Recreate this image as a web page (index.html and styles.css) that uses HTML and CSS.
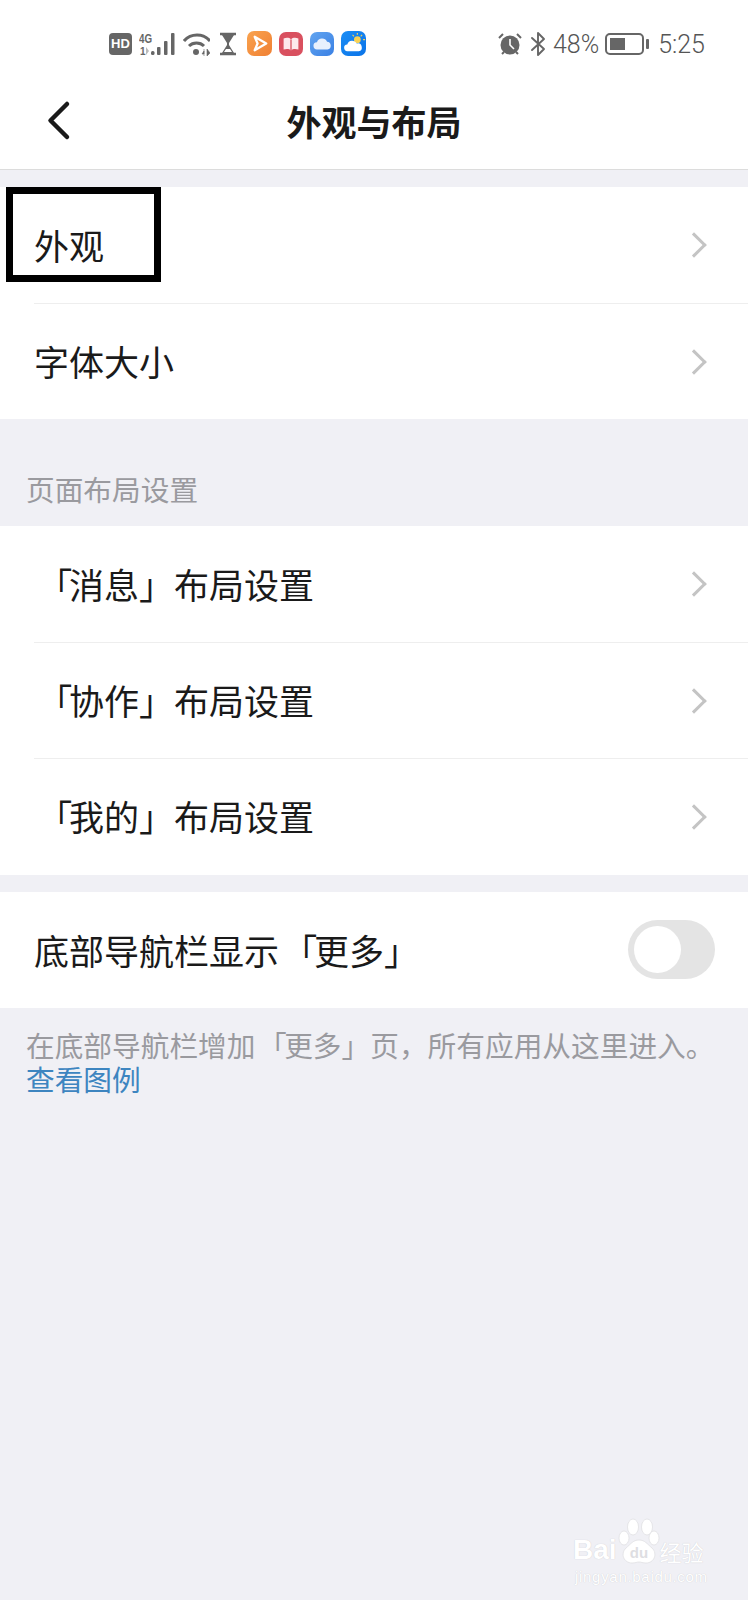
FILE: index.html
```html
<!DOCTYPE html>
<html lang="zh-CN">
<head>
  <meta charset="UTF-8" />
  <title>外观与布局</title>
  <link rel="stylesheet" href="styles.css">
</head>
<body>
  <div id="statusbar">
    <div class="status-left">
      <span class="hd-badge">HD</span>
      <svg class="st-icon" width="37" height="24" viewBox="0 0 37 24">
        <text x="0" y="11" class="tiny" textLength="13" lengthAdjust="spacingAndGlyphs">4G</text>
        <text x="1" y="23" class="tiny-small">1</text>
        <path d="M7 15l3 4-3 4z" fill="#bbb"/>
        <rect x="12" y="19" width="3.500" height="4" rx="1.500" fill="#666"/>
        <rect x="18" y="15" width="3.500" height="8" rx="1" fill="#666"/>
        <rect x="25" y="9" width="3.500" height="14" rx="1" fill="#666"/>
        <rect x="32" y="1" width="3.500" height="22" rx="1" fill="#666"/>
      </svg>
      <svg class="st-icon" width="27" height="24" viewBox="0 0 27 24">
        <path d="M1 9c7-8 19-8 26 0" fill="none" stroke="#666" stroke-width="3"/>
        <path d="M6 14c4-4 11-4 15 0" fill="none" stroke="#666" stroke-width="3"/>
        <circle cx="13" cy="20" r="3" fill="#666"/>
        <path d="M21 19l-2 3h2zM21 17v7M24 17v7l3-3z" fill="#666" stroke="#666" stroke-width=".6"/>
      </svg>
      <svg class="st-icon hourglass" width="18" height="24" viewBox="0 0 18 24">
        <path d="M1 2h16M1 22h16" stroke="#666" stroke-width="2.400"/>
        <path d="M3 3h12l-5 8v2l5 8H3l5-8v-2z" fill="#666"/>
        <path d="M7 17h4l2 3H5z" fill="#fff"/>
      </svg>
      <span class="app-icon app-orange">
        <svg viewBox="0 0 26 26"><path d="M8 6l12 7-12 7 3-7z" fill="none" stroke="#fff" stroke-width="2.400" stroke-linejoin="round"/></svg>
      </span>
      <span class="app-icon app-red">
        <svg viewBox="0 0 26 26"><path d="M5 7c3-1 6-1 8 1 2-2 5-2 8-1v12c-3-1-6-1-8 1-2-2-5-2-8-1z" fill="#fde9ec"/><path d="M13 8v12" stroke="#d9505f" stroke-width="1.400"/></svg>
      </span>
      <span class="app-icon app-blue">
        <svg viewBox="0 0 26 26"><path d="M8 19a4 4 0 0 1-.5-8 6 6 0 0 1 11-.5 4.300 4.300 0 0 1 .5 8.500z" fill="#e8f1fd"/></svg>
      </span>
      <span class="app-icon app-weather">
        <svg viewBox="0 0 26 26"><circle cx="17" cy="9" r="3.500" fill="#f7d154"/><path d="M17 2v2M23 9h2M22 4l-1.500 1.500M12 4l1.500 1.500" stroke="#f7d154" stroke-width="1.200"/><path d="M7 21a3.500 3.500 0 0 1-.5-7 5.500 5.500 0 0 1 10-1 4 4 0 0 1 2 8z" fill="#fff"/></svg>
      </span>
    </div>
    <div class="status-right">
      <svg class="st-icon" width="24" height="24" viewBox="1 0 24 24">
        <circle cx="13" cy="13" r="9.500" fill="#666"/>
        <path d="M13 7v6l4 4" fill="none" stroke="#fff" stroke-width="1.600"/>
        <path d="M2 6l4-4M24 6l-4-4M5 22l2-2M21 22l-2-2" stroke="#666" stroke-width="2"/>
      </svg>
      <svg class="st-icon st-bt" width="16" height="26" viewBox="0 0 16 26">
        <path d="M2 7l12 11-6 6V2l6 6L2 19" fill="none" stroke="#666" stroke-width="1.900" stroke-linejoin="round" stroke-linecap="round"/>
      </svg>
      <span class="st-text st-pct">48%</span>
      <span class="battery"><span class="battery-level"></span></span>
      <span class="battery-tip"></span>
      <span class="st-text st-time">5:25</span>
    </div>
  </div>

  <div id="navbar">
    <svg class="back-icon" width="26" height="42" viewBox="0 0 26 42">
      <path d="M21 4L4.500 20.500 21 37" fill="none" stroke="#1a1a1a" stroke-width="4.500" stroke-linecap="round" stroke-linejoin="round"/>
    </svg>
    <h1>外观与布局</h1>
  </div>

  <div class="group first-group">
    <div class="row">
      <span class="row-label">外观</span>
      <span class="chevron"></span>
    </div>
    <div class="row">
      <span class="row-label">字体大小</span>
      <span class="chevron"></span>
    </div>
    <div class="highlight-box"></div>
  </div>

  <div class="section-title">页面布局设置</div>

  <div class="group second-group">
    <div class="row">
      <span class="row-label"><span class="qm-open">「</span>消息」布局设置</span>
      <span class="chevron"></span>
    </div>
    <div class="row">
      <span class="row-label"><span class="qm-open">「</span>协作」布局设置</span>
      <span class="chevron"></span>
    </div>
    <div class="row">
      <span class="row-label"><span class="qm-open">「</span>我的」布局设置</span>
      <span class="chevron"></span>
    </div>
  </div>

  <div class="group third-group">
    <div class="row">
      <span class="row-label">底部导航栏显示<span class="qm-open">「</span>更多」</span>
      <span class="toggle"><span class="toggle-knob"></span></span>
    </div>
  </div>

  <p class="footnote">在底部导航栏增加<span class="qm-open">「</span>更多」页，所有应用从这里进入。<br><a href="#">查看图例</a></p>

  <div class="watermark">
    <div class="wm-top">
      <span class="wm-bai">Bai</span>
      <svg class="wm-paw" width="42" height="47" viewBox="0 0 42 47">
        <ellipse cx="15" cy="9" rx="5.500" ry="8" class="paw-part"/>
        <ellipse cx="29" cy="9" rx="5.500" ry="8" class="paw-part"/>
        <ellipse cx="6" cy="20" rx="5" ry="7" class="paw-part"/>
        <ellipse cx="36" cy="20" rx="5" ry="7" class="paw-part"/>
        <path d="M21 22c6 0 8 4 13 8 6 6 2 15-6 15-3 0-5-1-7-1s-4 1-7 1c-8 0-12-9-6-15 5-4 7-8 13-8z" class="paw-part"/>
        <text x="21" y="40" text-anchor="middle" class="paw-du">du</text>
      </svg>
      <span class="wm-cn">经验</span>
    </div>
    <div class="wm-url">jingyan.baidu.com</div>
  </div>
</body>
</html>
```

FILE: styles.css
```css
* {
  box-sizing: border-box;
}

body {
  margin: 0;
  width: 748px;
  height: 1600px;
  overflow: hidden;
  position: relative;
  background: #f0f0f5;
  color: #1a1a1a;
  font-family: "Noto Sans CJK SC", "Liberation Sans", sans-serif;
}

/* status bar */
#statusbar {
  height: 80px;
  background: #fff;
  display: flex;
  justify-content: space-between;
  align-items: center;
  padding: 7px 43px 0 109px;
}

.status-left,
.status-right {
  display: flex;
  align-items: center;
}

.status-left {
  gap: 7px;
}

.st-icon {
  display: block;
}

.tiny {
  font-family: "Liberation Sans", sans-serif;
  font-size: 13px;
  font-weight: bold;
  fill: #666;
}

.tiny-small {
  font-family: "Liberation Sans", sans-serif;
  font-size: 10px;
  font-weight: bold;
  fill: #666;
}

.hd-badge {
  width: 23px;
  height: 22px;
  border-radius: 4px;
  background: #666;
  color: #fff;
  font-family: "Liberation Sans", sans-serif;
  font-size: 13px;
  font-weight: bold;
  text-align: center;
  line-height: 22px;
}

.hourglass {
  margin-left: 2px;
  margin-right: 3px;
}

.app-icon {
  width: 25px;
  height: 25px;
  border-radius: 7px;
  display: block;
}

.app-icon svg {
  display: block;
  width: 100%;
  height: 100%;
}

.app-orange {
  background: linear-gradient(135deg, #f9a34f, #f08033);
}

.app-red {
  width: 24px;
  height: 24px;
  background: #d9505f;
}

.app-blue {
  width: 24px;
  height: 24px;
  background: linear-gradient(135deg, #62a5f0, #3a80e4);
}

.app-weather {
  background: linear-gradient(135deg, #1a8df5, #0b74e8);
}

.status-right {
  color: #666;
}

.st-bt {
  margin-left: 8px;
}

.st-text {
  margin-top: 2px;
  font-family: "Roboto", sans-serif;
  font-weight: 300;
  font-size: 25px;
  color: #555;
}

.st-pct {
  margin-left: 7px;
}

.battery {
  width: 39px;
  height: 22px;
  margin-left: 6px;
  border: 2px solid #666;
  border-radius: 5px;
  padding: 3px;
  display: block;
}

.battery-level {
  display: block;
  width: 15px;
  height: 12px;
  background: #666;
}

.battery-tip {
  width: 3px;
  height: 10px;
  margin-left: 2px;
  background: #666;
  border-radius: 1px;
}

.st-time {
  margin-left: 9px;
}

/* nav */
#navbar {
  height: 90px;
  background: #fff;
  border-bottom: 1px solid #dcdcdc;
  display: flex;
  align-items: center;
  justify-content: center;
  position: relative;
  padding-bottom: 8px;
}

.back-icon {
  position: absolute;
  left: 46px;
  top: 20px;
}

#navbar h1 {
  margin: 0;
  font-size: 35px;
  font-weight: 700;
  line-height: 1;
}

/* list */
.group {
  background: #fff;
  position: relative;
}

.first-group {
  margin-top: 17px;
}

.second-group {
  padding-bottom: 1px;
}

.third-group {
  margin-top: 17px;
}

.row {
  height: 116px;
  margin-left: 34px;
  padding-right: 40px;
  display: flex;
  align-items: center;
  justify-content: space-between;
  border-top: 1px solid #eeeeee;
}

.row:first-child {
  border-top: none;
}

.row-label {
  font-size: 35px;
  line-height: 1;
  padding-bottom: 2px;
}

/* opening bracket hugs the text that follows it */
.qm-open {
  margin-left: .09em;
  margin-right: -.09em;
}

.chevron {
  width: 18px;
  height: 18px;
  margin-right: 5px;
  border-top: 3px solid #c4c4c4;
  border-right: 3px solid #c4c4c4;
  transform: rotate(45deg);
}

.highlight-box {
  position: absolute;
  left: 6px;
  top: 0;
  width: 155px;
  height: 95px;
  border: 7px solid #000;
}

.section-title {
  height: 107px;
  padding: 52px 0 0 26px;
  font-size: 28.7px;
  line-height: 36px;
  color: #9a9a9f;
}

.toggle {
  width: 87px;
  height: 59px;
  margin-right: -7px;
  margin-bottom: 2px;
  border-radius: 30px;
  background: #e4e4e4;
  padding: 6px;
  display: block;
}

.toggle-knob {
  display: block;
  width: 47px;
  height: 47px;
  border-radius: 50%;
  background: #fff;
}

.footnote {
  margin: 0;
  padding: 20px 20px 0 26px;
  font-size: 28.7px;
  line-height: 34px;
  color: #9a9a9f;
  white-space: nowrap;
}

.footnote a {
  color: #3d85c0;
  text-decoration: none;
}

/* baidu mark */
.watermark {
  position: absolute;
  left: 573px;
  top: 1518px;
  width: 150px;
  color: #fff;
  font-family: "Liberation Sans", sans-serif;
}

.wm-top {
  display: flex;
  align-items: flex-start;
  height: 47px;
}

.wm-bai {
  margin-top: 18px;
  font-size: 28px;
  font-weight: bold;
  line-height: 28px;
  text-shadow: 0 0 1px #c4c4c8;
}

.wm-paw {
  margin-left: 1px;
}

.paw-part {
  fill: #fff;
  stroke: #dcdce0;
  stroke-width: .7;
}

.paw-du {
  font-family: "Liberation Sans", sans-serif;
  font-size: 15px;
  font-weight: bold;
  fill: #dedee2;
}

.wm-cn {
  margin-top: 18px;
  font-family: "Noto Sans CJK SC", sans-serif;
  font-size: 22px;
  line-height: 30px;
  text-shadow: 0 0 1px #c4c4c8;
}

.wm-url {
  margin: 4px 0 0 2px;
  font-size: 15px;
  line-height: 15px;
  letter-spacing: .7px;
  text-shadow: 0 0 1px #c4c4c8;
}
```
